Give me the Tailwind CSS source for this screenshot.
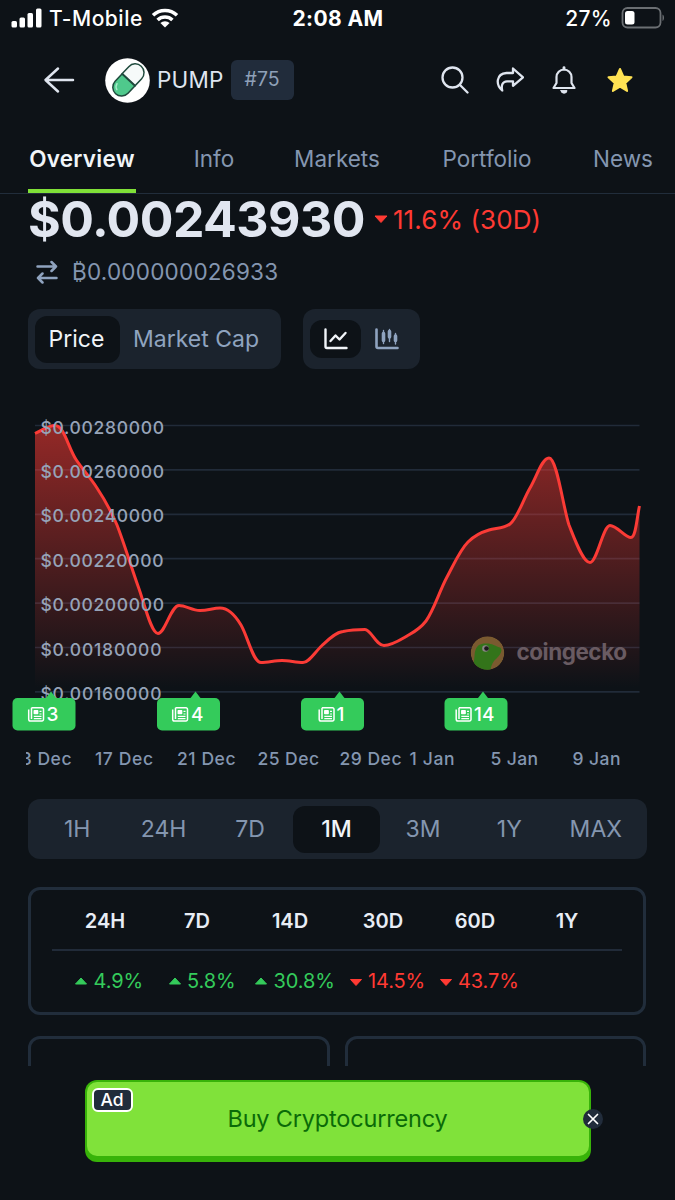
<!DOCTYPE html>
<html lang="en">
<head>
  <meta charset="UTF-8">
  <title>PUMP</title>
  <script src="https://cdn.jsdelivr.net/npm/@tailwindcss/browser@4"></script>
</head>
<body class="bg-[#0d1217] font-['Inter',sans-serif] text-[#dfe5ef]">
  <div class="w-[675px] h-[1200px] overflow-hidden flex flex-col">

    <!-- status bar -->
    <div class="h-[37px] shrink-0 grid grid-cols-3 items-center pl-[11px] pr-[10px] text-white whitespace-nowrap">
      <div class="flex items-center">
        <svg class="w-[31px] h-5 -mt-[2px]" viewBox="0 0 31 20" fill="#fff">
          <rect x="0.5" y="13" width="5.5" height="6.5" rx="1.5"/>
          <rect x="8.5" y="9.5" width="5.5" height="10" rx="1.5"/>
          <rect x="16.5" y="5" width="5.5" height="14.5" rx="1.5"/>
          <rect x="25" y="0.5" width="5.5" height="19" rx="1.5"/>
        </svg>
        <span class="ml-[7px] text-[21px] font-medium tracking-[0.5px]">T-Mobile</span>
        <svg class="ml-[8px] -mt-[2px] w-7 h-5" viewBox="0 0 28 20" fill="none" stroke="#fff" stroke-width="3.6">
          <path d="M2 7.2a17.5 17.5 0 0 1 24 0"/>
          <path d="M6.6 12a10.8 10.8 0 0 1 14.8 0"/>
          <path d="M14 19.6l-4.6-4.6a6.6 6.6 0 0 1 9.2 0z" fill="#fff" stroke="none"/>
        </svg>
      </div>
      <div class="text-center text-[21px] font-bold tracking-[0.400px]"><span>2:08 AM</span></div>
      <div class="flex items-center justify-end">
        <span class="text-[21px] font-medium tracking-[0.300px]">27%</span>
        <svg class="ml-[9px] -mt-[2px] w-[44px] h-[22px]" viewBox="0 0 44 22">
          <rect x="1.5" y="1" width="38" height="19.5" rx="5" fill="none" stroke="#6b6f73" stroke-width="1.8"/>
          <rect x="4" y="4" width="9.5" height="13.5" rx="2.5" fill="#fff"/>
          <path d="M41.5 7.5c2 .8 2 5.700 0 6.500z" fill="#6b6f73"/>
        </svg>
      </div>
    </div>

    <!-- coin header -->
    <div class="h-[86px] shrink-0 flex items-center pl-[43px] pr-[41px]">
      <svg class="w-8 h-7" viewBox="0 0 32 28" fill="none" stroke="#dfe5ef" stroke-width="2.5" stroke-linecap="round" stroke-linejoin="round">
        <path d="M30 14H3M15 2.500L2.500 14L15 25.500"/>
      </svg>
      <svg class="ml-[30px] w-[45px] h-[45px]" viewBox="0 0 45 45">
        <circle cx="22.500" cy="22.500" r="22.300" fill="#fff"/>
        <g transform="rotate(43 22.500 22.500)" stroke="#1f4a3d" stroke-width="1.500">
          <path d="M14 22.500V13a8.800 8.800 0 0 1 17.600 0V22.500z" transform="translate(0 -1.500)" fill="#f6faf9"/>
          <path d="M14 21.500V31.500a8.800 8.800 0 0 0 17.600 0V21.500z" fill="#4fc98c"/>
          <path d="M17 32a6 6 0 0 0 4 4.500" stroke="#a6ecca" fill="none" stroke-linecap="round"/>
        </g>
      </svg>
      <span class="ml-[7px] text-[22.500px] tracking-[0.2px]">PUMP</span>
      <span class="ml-[7px] w-[63px] h-10 rounded-md bg-[#212c3b] flex items-center justify-center text-[19.500px] text-[#8fa0b8]">#75</span>
      <div class="ml-auto flex items-center">
        <svg class="w-7 h-7" viewBox="0 0 28 28" fill="none" stroke="#dfe5ef" stroke-width="2.300" stroke-linecap="round">
          <circle cx="11.500" cy="11.500" r="10"/>
          <path d="M19 19L26.500 26.500"/>
        </svg>
        <svg class="ml-[27px] w-7 h-7" viewBox="0 0 28 28" fill="none" stroke="#dfe5ef" stroke-width="2.300" stroke-linecap="round" stroke-linejoin="round">
          <path d="M6.200 24.500C-.5 18.500 0 8 10.500 7H17V2.500L27 11.300L17 19.800V15.300H11C6.500 15.500 5 19 6.200 24.500z"/>
        </svg>
        <svg class="ml-[28px] w-6 h-7" viewBox="0 0 24 28" fill="none" stroke="#dfe5ef" stroke-width="2.200" stroke-linecap="round" stroke-linejoin="round">
          <path d="M1.500 22L4.500 17V11a7.500 7.500 0 0 1 15 0V17L22.500 22z"/>
          <path d="M12 3.200V1.600" stroke-width="2.800"/>
          <path d="M9 24.600h6a3 2.600 0 0 1-6 0z" fill="#dfe5ef" stroke-width="1"/>
        </svg>
        <svg class="ml-[31px] w-[27px] h-7" viewBox="0 0 27 28">
          <path d="M13 3L16.300 10.400L24.500 11.200L18.300 16.900L20.100 25L13 20.700L5.900 25L7.700 16.900L1.500 11.200L9.700 10.400z" fill="#ffe253" stroke="#ffe253" stroke-width="2" stroke-linejoin="round"/>
        </svg>
      </div>
    </div>

    <!-- tabs -->
    <div class="h-[71px] shrink-0 border-b-[1.500px] border-[#212d3b] flex pl-7 text-[22.500px] leading-[71px] text-[#8496b0] whitespace-nowrap">
      <div class="w-[108px] border-b-4 border-[#80e038] text-center font-semibold tracking-[0.250px] text-[#f1f5f9]"><span>Overview</span></div>
      <div class="ml-[57px] w-[42px] text-center">Info</div>
      <div class="ml-[58px] w-[88px] text-center">Markets</div>
      <div class="ml-[60px] w-[92px] text-center">Portfolio</div>
      <div class="ml-[59px] w-[62px] text-center">News</div>
    </div>

    <!-- price -->
    <div class="h-[50px] shrink-0 flex items-center pl-[28px] whitespace-nowrap">
      <span class="text-[50px] leading-[50px] font-bold tracking-[-0.550px] text-[#e1e6f0]">$0.00243930</span>
      <svg class="ml-[9px] w-[14px] h-[9px]" viewBox="0 0 14 9"><path d="M1 1H13L7 7.500z" fill="#ff3a33" stroke="#ff3a33" stroke-linejoin="round"/></svg>
      <span class="ml-[5px] text-[26px] tracking-[0.100px] text-[#ff3a33]">11.6% (30D)</span>
    </div>
    <div class="h-[56px] shrink-0 flex items-center pl-9 text-[22.500px] text-[#8496b0]">
      <svg class="w-[22px] h-6" viewBox="0 0 22 24" fill="none" stroke="#8fa3bf" stroke-width="2.500" stroke-linecap="round" stroke-linejoin="round">
        <path d="M1.500 6.500H20M15.500 2L20 6.500L15.500 11M20.500 18H2M6.500 13.500L2 18L6.500 22.500"/>
      </svg>
      <span class="ml-[14px] tracking-[0.220px]">₿0.000000026933</span>
    </div>

    <!-- chart toggles -->
    <div class="mt-[9px] h-[60px] shrink-0 flex pl-7 gap-[22px] text-[23px]">
      <div class="w-[253px] rounded-xl bg-[#1b232d] px-[7px] flex items-center whitespace-nowrap">
        <span class="w-[85px] h-[47px] rounded-xl bg-[#0d1217] flex items-center justify-center pr-[2px] text-[#f1f5f9]">Price</span>
        <span class="ml-[13px] text-[#8fa3bf]">Market Cap</span>
      </div>
      <div class="w-[117px] rounded-xl bg-[#1b232d] px-[7px] flex items-center">
        <span class="w-[51px] h-[38px] rounded-xl bg-[#0d1217] flex items-center justify-center">
          <svg class="w-6 h-[22px]" viewBox="0 0 24 22" fill="none" stroke="#f1f5f9" stroke-width="2.400" stroke-linecap="round" stroke-linejoin="round">
            <path d="M1.500 1.500V18.500a1.500 1.500 0 0 0 1.500 1.500H22.500M6.500 13L11.500 7.500L15.500 11.500L21.500 5"/>
          </svg>
        </span>
        <svg class="ml-[14px] w-6 h-[22px]" viewBox="0 0 24 22" fill="none" stroke="#8fa3bf" stroke-width="2.600" stroke-linecap="round">
          <path d="M1.500 1.500V18.500a1.500 1.500 0 0 0 1.500 1.500H22.500"/>
          <path d="M8.500 2.500V15.500M14.500 1.500V13.500M20.500 5.500V16" stroke-width="1.400"/>
          <path d="M8.500 5.500V12.500M14.500 3.500V9M20.500 8V12.500" stroke-width="3.600"/>
        </svg>
      </div>
    </div>

    <!-- chart -->
    <svg class="mt-[31px] w-[675px] h-[380px] shrink-0" viewBox="0 400 675 380">
      <defs>
        <linearGradient id="fill" gradientUnits="userSpaceOnUse" x1="0" y1="425" x2="0" y2="688">
          <stop offset="0" stop-color="#ff3a33" stop-opacity="0.56"/>
          <stop offset="1" stop-color="#ff3a33" stop-opacity="0"/>
        </linearGradient>
        <clipPath id="axis"><rect x="26" y="740" width="640" height="40"/></clipPath>
        <clipPath id="coin"><circle cx="487.500" cy="653" r="16.800"/></clipPath>
        <g id="news">
          <path d="M-6.500 -14.500L0 -23L6.500 -14.500z" transform="translate(7 0)" fill="#34cb5b"/>
          <rect x="-31.500" y="-16.500" width="63" height="32.500" rx="5" fill="#34cb5b"/>
        </g>
        <g id="paper" fill="none" stroke="#fff" stroke-width="1.500" stroke-linejoin="round">
          <path d="M3.500 .8H14a1.500 1.500 0 0 1 1.500 1.500V12.500a1.500 1.500 0 0 1-1.500 1.500H2.500a1.800 1.800 0 0 1-1.800-1.800V2.500M3.500 .8V12"/>
          <path d="M11.500 4.300H13.500M11.500 7H13.500M5.800 9.300H13.500M5.800 11.600H13.500" stroke-width="1.200"/>
          <rect x="6.300" y="3.800" width="3.300" height="2.800" fill="#fff"/>
        </g>
      </defs>
      <g stroke="#212b39" stroke-width="1.700">
        <path d="M35 425.500H639.500M35 469.900H639.500M35 514.300H639.500M35 558.700H639.500M35 603.100H639.500M35 647.500H639.500M35 691.900H639.500"/>
      </g>
      <path id="area" fill="url(#fill)"/>
      <path id="line" fill="none" stroke="#fb3b36" stroke-width="3" stroke-linejoin="round"/>
      <g font-size="17.500" font-weight="500" fill="#96a3b8">
        <text x="40.500" y="433.500" textLength="123.500">$0.00280000</text>
        <text x="40.500" y="477.900" textLength="123.500">$0.00260000</text>
        <text x="40.500" y="522.300" textLength="123.500">$0.00240000</text>
        <text x="40.500" y="566.700" textLength="123">$0.00220000</text>
        <text x="40.500" y="611.100" textLength="123.500">$0.00200000</text>
        <text x="40.500" y="655.500" textLength="121">$0.00180000</text>
        <text x="40.500" y="699.900" textLength="121">$0.00160000</text>
      </g>
      <!-- watermark -->
      <g clip-path="url(#coin)">
        <circle cx="487.500" cy="653" r="16.800" fill="#7a5a30"/>
        <path d="M473 675V664C475 660 474 654 475.500 650C477 645 481 643 487 643.500C492 643.500 495 646 500 647.500C503.500 650 500 655 496.500 658.500C493 661.500 491 665 490 673z" fill="#33741a"/>
        <circle cx="485.500" cy="648.500" r="3.300" fill="#8b8588"/>
        <circle cx="486.500" cy="648.500" r="2.300" fill="#1c1a1c"/>
      </g>
      <text x="516.500" y="659.500" textLength="110.500" font-size="22.500" font-weight="700" fill="#695b62">coingecko</text>
      <!-- news markers -->
      <g font-size="19" font-weight="500" fill="#fff">
        <use href="#news" x="44" y="714.500"/>
        <use href="#paper" x="28" y="707"/>
        <text x="46.500" y="721.300">3</text>
        <use href="#news" x="188.500" y="714.500"/>
        <use href="#paper" x="172" y="707"/>
        <text x="191" y="721.300">4</text>
        <use href="#news" x="332.500" y="714.500"/>
        <use href="#paper" x="318.500" y="707"/>
        <text x="336.500" y="721.300">1</text>
        <use href="#news" x="476" y="714.500"/>
        <use href="#paper" x="455.500" y="707"/>
        <text x="474" y="721.300">14</text>
      </g>
      <g font-size="17.500" font-weight="500" fill="#8496b0" clip-path="url(#axis)">
        <text x="13" y="764.500" textLength="58.500">13 Dec</text>
        <text x="95" y="764.500" textLength="58">17 Dec</text>
        <text x="177" y="764.500" textLength="58.500">21 Dec</text>
        <text x="257.500" y="764.500" textLength="61.500">25 Dec</text>
        <text x="339.500" y="764.500" textLength="62">29 Dec</text>
        <text x="409.500" y="764.500" textLength="45">1 Jan</text>
        <text x="490.500" y="764.500" textLength="47.500">5 Jan</text>
        <text x="572.500" y="764.500" textLength="48">9 Jan</text>
      </g>
    </svg>

    <!-- range picker -->
    <div class="mt-[19px] mx-7 h-[60px] shrink-0 rounded-xl bg-[#1b232d] py-[6px] pl-[6px] pr-[8px] grid grid-cols-7 items-center text-center text-[23px] text-[#8496b0]">
      <span>1H</span>
      <span>24H</span>
      <span>7D</span>
      <span class="h-[47px] leading-[47px] rounded-xl bg-[#0d1217] font-medium text-[#f1f5f9]">1M</span>
      <span>3M</span>
      <span>1Y</span>
      <span>MAX</span>
    </div>

    <!-- performance table -->
    <div class="mt-[28px] ml-7 w-[618px] h-[128px] shrink-0 rounded-xl border-[3.500px] border-[#212d3b] px-[21px]">
      <div class="h-[61px] pt-[2px] border-b-2 border-[#212b39] grid grid-cols-[106px_78px_108px_78px_106px_78px] items-center text-center text-[20px] font-semibold text-[#e8edf5]">
        <span>24H</span><span>7D</span><span>14D</span><span>30D</span><span>60D</span><span>1Y</span>
      </div>
      <div id="changes" class="h-[60px] flex items-center pl-[22px] text-[20px]"></div>
    </div>

    <!-- next cards, cut off by the ad bar -->
    <div class="mt-[21px] ml-7 w-[618px] h-[30px] shrink-0 overflow-hidden grid grid-cols-[302px_301px] justify-between">
      <div class="h-20 rounded-xl border-[3.500px] border-[#212d3b]"></div>
      <div class="h-20 rounded-xl border-[3.500px] border-[#212d3b]"></div>
    </div>

    <!-- ad -->
    <div class="relative mt-[14px] ml-[84.500px] w-[506px] h-[82px] shrink-0 rounded-xl bg-[#38b309] pt-[2px] px-[2px] pb-[6px]">
      <div class="h-full rounded-[10px] bg-[#80e23a] flex items-center justify-center text-[23.500px] tracking-[-0.180px] text-[#0b6a08]">Buy Cryptocurrency</div>
      <span class="absolute left-[7px] top-[8px] w-[41px] h-6 rounded-md border-2 border-white bg-[#212c3b] text-center text-[17.500px] leading-5 font-medium text-white">Ad</span>
      <svg class="absolute left-[498.500px] top-[29px] w-5 h-5" viewBox="0 0 20 20">
        <circle cx="10" cy="10" r="10" fill="#212c3b"/>
        <path d="M5.500 5.500L14.500 14.500M14.500 5.500L5.500 14.500" stroke="#fff" stroke-width="1.700" stroke-linecap="round"/>
      </svg>
    </div>
  </div>

  <script>
    const curve = "M35 433.5C42 430 49 425.500 55 425.500C64 425.500 68 447 76 459.500C83 470 90 477 97 488C105 500 111 511 117 525C124 543 131 566 138 586C144 602 151 633.500 158 633.500C165 633.500 171 605.500 179 605.500C186 605.500 192 610.500 200 610.500C208 610.500 213 608 220 608C228 608 235 615 241 625C248 637 253 662.500 261 662.500C268 662.500 275 660.500 282 660.500C289 660.500 296 662.500 303 662.500C309 662.500 315 652 322 645.500C329 639 336 632 343 631.500C350 630 357 629.500 365 629.500C371 629.500 376 645.500 384 645.500C392 645.500 400 640 407 636C414 632 420 629 426 621C434 610 439 592 447 577C454 564 460 550 468 542C475 535 482 532 489 530C496 528 504 528.500 510 524C517 519 523 500 530 488C537 476 542 458 549 458C557 458 563 507 569 525C575 540 583 562.500 590 562.500C597 562.500 603 525.500 610 525.500C617 525.500 625 537.500 631 537.500C636 537.500 637 516 639.500 506";
    document.getElementById("line").setAttribute("d", curve);
    document.getElementById("area").setAttribute("d", curve + "V691H35Z");

    const changes = [
      { value: "4.9%", up: true, width: 93.500 },
      { value: "5.8%", up: true, width: 86.500 },
      { value: "30.8%", up: true, width: 94.500 },
      { value: "14.5%", up: false, width: 90 },
      { value: "43.7%", up: false, width: 80 }
    ];
    document.getElementById("changes").innerHTML = changes.map(c => `
      <div class="flex items-center shrink-0 ${c.up ? "text-[#34cb5b]" : "text-[#ff3a33]"}" style="width:${c.width}px">
        <svg class="w-[14px] h-[9px] shrink-0" viewBox="0 0 14 9" fill="currentColor" stroke="currentColor" stroke-linejoin="round">
          <path d="${c.up ? "M1.500 7H12.500L7 1z" : "M1.500 2.500H12.500L7 8.500z"}"/>
        </svg>
        <span class="ml-[5.500px] tracking-[-0.100px]">${c.value}</span>
      </div>`).join("");
  </script>
</body>
</html>
